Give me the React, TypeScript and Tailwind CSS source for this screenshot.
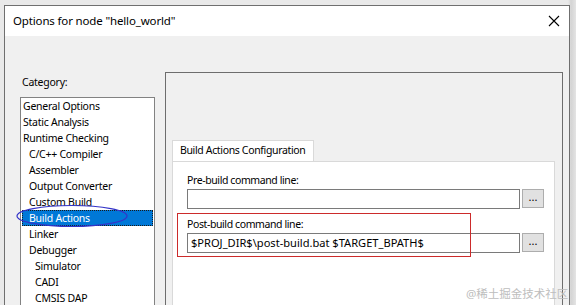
const font = { fontFamily: '"Noto Sans", "Liberation Sans", sans-serif' }

type Item = { label: string; level: 0 | 1 | 2; selected?: boolean }

const items: Item[] = [
  { label: "General Options", level: 0 },
  { label: "Static Analysis", level: 0 },
  { label: "Runtime Checking", level: 0 },
  { label: "C/C++ Compiler", level: 1 },
  { label: "Assembler", level: 1 },
  { label: "Output Converter", level: 1 },
  { label: "Custom Build", level: 1 },
  { label: "Build Actions", level: 1, selected: true },
  { label: "Linker", level: 1 },
  { label: "Debugger", level: 1 },
  { label: "Simulator", level: 2 },
  { label: "CADI", level: 2 },
  { label: "CMSIS DAP", level: 2 },
]

const indent = ["pl-[1px]", "pl-[7px]", "pl-[13px]"]

function BrowseButton() {
  return (
    <button className="flex h-[19px] w-[22px] items-start justify-center border border-[#adadad] bg-[#e1e1e1] text-[11px] leading-[14px] text-black">
      ...
    </button>
  )
}

function Field({ label, value }: { label: string; value?: string }) {
  return (
    <div className="flex flex-col">
      <div className="h-[17px] text-[10.5px] leading-[16px] tracking-[-0.4px] text-black">{label}</div>
      <div className="flex items-start gap-[2px]">
        <div className="flex h-[20px] w-[333px] items-center whitespace-nowrap border border-[#7a7a7a] bg-white px-[3px] text-[11.1px] text-black">
          {value}
        </div>
        <BrowseButton />
      </div>
    </div>
  )
}

export default function App() {
  return (
    <div
      className="relative h-[305px] w-[576px] overflow-hidden bg-[linear-gradient(to_right,#e9e9e9_0px,#e9e9e9_568px,#d4d4d4_571px,#e4e4e4_576px)] pl-[4px] pt-[5px]"
      style={font}
    >
      {/* Dialog window */}
      <div className="h-[310px] w-[566px] border border-[#6f6f6f] bg-[#f0f0f0]">
        {/* Title bar */}
        <div className="flex h-[30px] items-center justify-between bg-white pl-[8px] pr-[8px]">
          <span className="text-[11.5px] tracking-[-0.15px] text-black">Options for node "hello_world"</span>
          <svg width="12" height="12" viewBox="0 0 12 12" className="mr-[1px]">
            <path d="M1 1 L11 11 M11 1 L1 11" stroke="#000" strokeWidth="1.1" />
          </svg>
        </div>

        {/* Body */}
        <div className="flex pt-[36px]">
          {/* Category column */}
          <div className="ml-[15px] mt-[2px] w-[135px]">
            <div className="h-[23px] pl-[2px] text-[10.5px] leading-[16px] tracking-[-0.25px] text-black">Category:</div>
            <div className="h-[220px] border border-[#828282] bg-white p-[1px] pt-0">
              {items.map((it) => (
                <div
                  key={it.label}
                  className={`h-[16px] whitespace-nowrap text-[10.5px] leading-[16px] tracking-[-0.25px] ${indent[it.level]} ${
                    it.selected
                      ? "bg-[#0078d7] text-white outline-1 outline-dotted outline-offset-[-1px] outline-[#1a1a1a]"
                      : "text-black"
                  }`}
                >
                  {it.label}
                </div>
              ))}
            </div>
          </div>

          {/* Options panel */}
          <div className="ml-[10px] h-[240px] w-[398px] border border-[#6d6d6d] bg-[#f0f0f0] pl-[6px] pt-[67px]">
            {/* Tab */}
            <div className="flex h-[21px] w-[142px] items-center whitespace-nowrap border border-b-0 border-[#d9d9d9] bg-white pl-[7px] text-[10.5px] tracking-[-0.35px] text-black">
              Build Actions Configuration
            </div>
            {/* Tab page */}
            <div className="flex h-[150px] w-[383px] flex-col gap-[7px] border border-[#d9d9d9] bg-white pl-[14px] pt-[10px]">
              <Field label="Pre-build command line:" />
              <Field label="Post-build command line:" value="$PROJ_DIR$\post-build.bat $TARGET_BPATH$" />
            </div>
          </div>
        </div>
      </div>

      {/* Annotations */}
      <div className="absolute left-[177px] top-[213px] h-[44px] w-[294px] border border-[#cc2b2b]" />
      <svg className="absolute left-[14px] top-[203px]" width="116" height="26" viewBox="0 0 116 26">
        <ellipse cx="58" cy="13" rx="55" ry="10.5" fill="none" stroke="#3434c8" strokeWidth="1.2" />
      </svg>
      <div
        className="absolute left-[466px] top-[286px] whitespace-nowrap text-[11.5px] leading-[16px] text-[#bdbdbd]"
        style={{ fontFamily: '"Noto Sans", "Noto Sans CJK SC", sans-serif' }}
      >
        @稀土掘金技术社区
      </div>
    </div>
  )
}
